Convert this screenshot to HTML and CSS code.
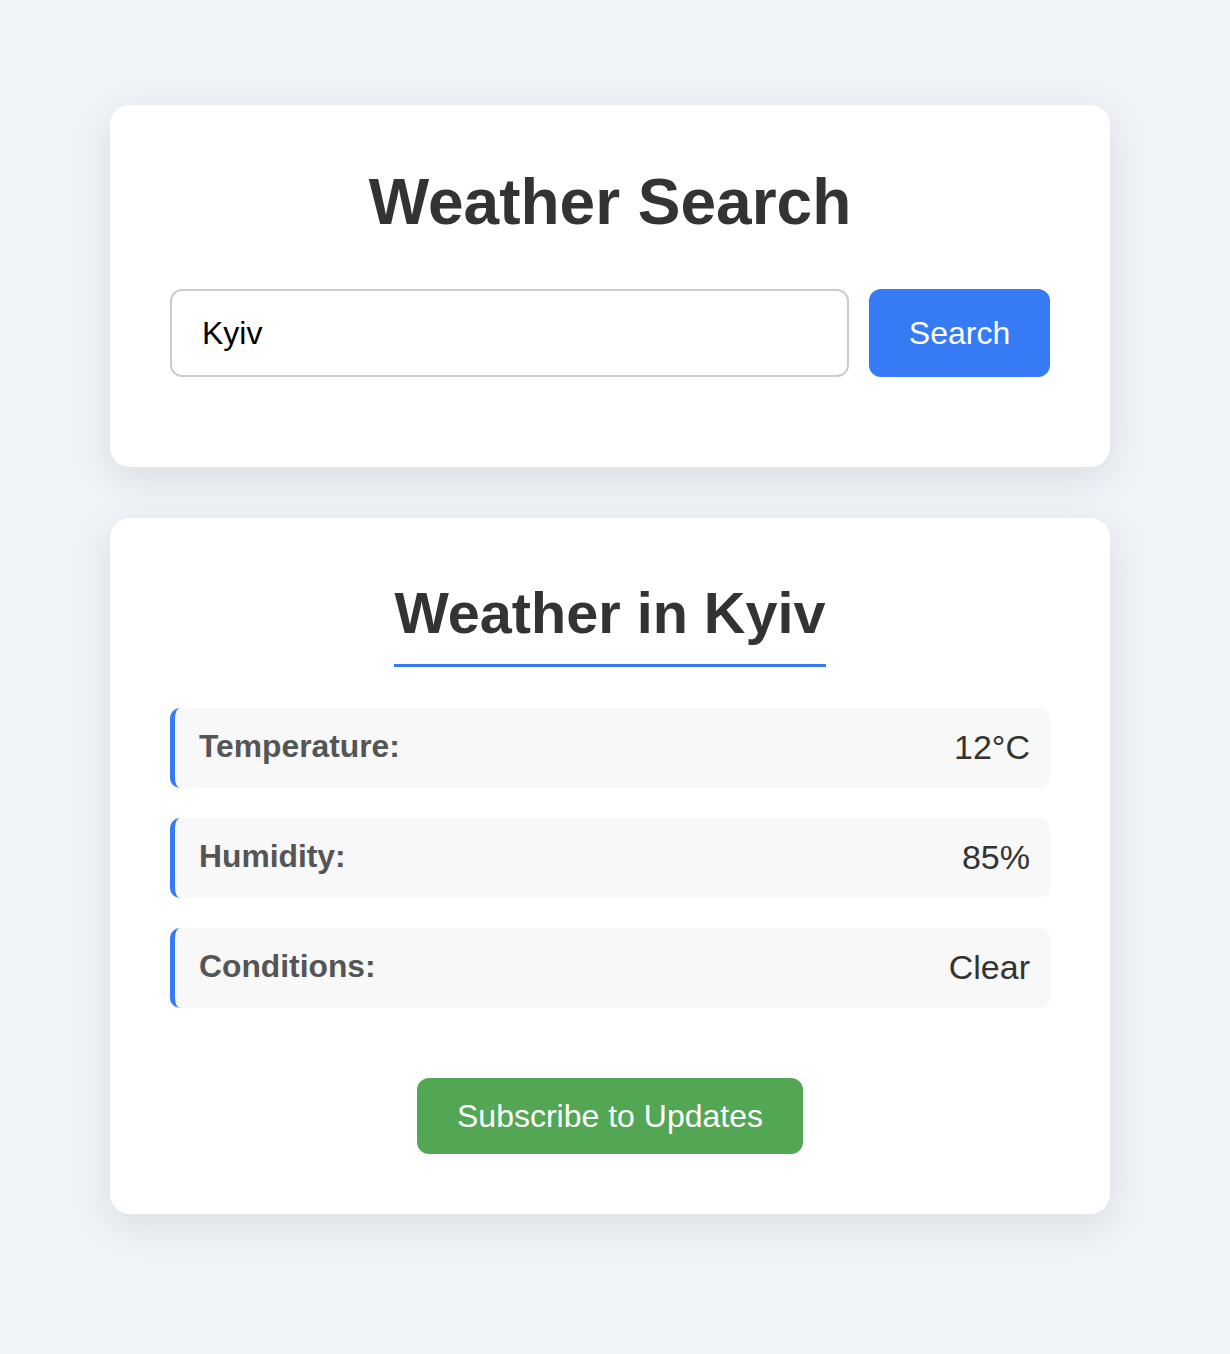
FILE: index.html
```html
<!DOCTYPE html>
<html lang="en">
<head>
<meta charset="utf-8">
<title>Weather Search</title>
<link rel="stylesheet" href="styles.css">
</head>
<body>
<main class="page">
  <section class="card search-card">
    <h1 class="title">Weather Search</h1>
    <form class="search-form">
      <input class="search-input" type="text" value="Kyiv">
      <button class="btn btn-search" type="button">Search</button>
    </form>
  </section>
  <section class="card result-card">
    <div class="result-head">
      <h2 class="result-title">Weather in Kyiv</h2>
    </div>
    <div class="rows">
      <div class="row"><span class="row-label">Temperature:</span><span class="row-value">12°C</span></div>
      <div class="row"><span class="row-label">Humidity:</span><span class="row-value">85%</span></div>
      <div class="row"><span class="row-label">Conditions:</span><span class="row-value">Clear</span></div>
    </div>
    <div class="actions">
      <button class="btn btn-subscribe" type="button">Subscribe to Updates</button>
    </div>
  </section>
</main>
</body>
</html>
```

FILE: styles.css
```css
* { box-sizing: border-box; }
html, body { margin: 0; padding: 0; }
body {
  background: #f0f4f8;
  font-family: "Liberation Sans", Arial, sans-serif;
  color: #333;
  min-height: 1354px;
  padding-right: 10px;
}
.page {
  width: 1000px;
  margin: 0 auto;
  padding-top: 105px;
  display: flex;
  flex-direction: column;
  gap: 51px;
}
.card {
  background: #fff;
  border-radius: 20px;
  padding: 60px;
  box-shadow: 0 10px 40px rgba(0, 0, 0, 0.1);
}
.title {
  margin: 0 0 50px;
  font-size: 64px;
  font-weight: 700;
  text-align: center;
  color: #333;
  line-height: 74px;
}
.search-form {
  display: flex;
  gap: 20px;
  margin: 0 0 30px;
  height: 88px;
}
.search-input {
  flex: 1;
  min-width: 0;
  height: 88px;
  font-family: inherit;
  font-size: 32px;
  line-height: 38px;
  padding: 0 30px;
  border: 2px solid #ccc;
  border-radius: 12px;
  color: #000;
  outline: none;
}
.btn {
  font-family: inherit;
  font-size: 32px;
  border: none;
  border-radius: 12px;
  color: #fff;
  cursor: pointer;
  line-height: 36px;
}
.btn-search {
  width: 181px;
  height: 88px;
  background: #367bf5;
  padding: 0 20px;
}
.result-head {
  text-align: center;
  margin-bottom: 41px;
}
.result-title {
  display: inline-block;
  margin: 2px 0 0;
  font-size: 57.6px;
  font-weight: 700;
  line-height: 66px;
  padding-bottom: 18px;
  border-bottom: 3px solid #367bf5;
  color: #333;
}
.rows {
  display: flex;
  flex-direction: column;
  gap: 30px;
}
.row {
  display: flex;
  justify-content: space-between;
  background: #f8f8f8;
  border-left: 5px solid #367bf5;
  border-radius: 10px;
  padding: 20px 20px 20px 24px;
  height: 80px;
}
.row-label {
  font-weight: 700;
  font-size: 31.8px;
  color: #555;
}
.row-value {
  font-size: 34px;
  color: #333;
}
.actions {
  display: flex;
  justify-content: center;
  margin-top: 70px;
}
.btn-subscribe {
  background: #53a653;
  padding: 20px 40px;
  width: 386px;
}
```
